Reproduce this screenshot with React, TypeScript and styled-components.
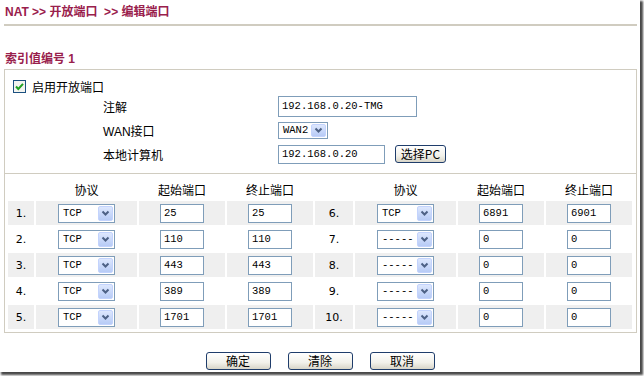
import styled, { createGlobalStyle } from "styled-components";

const GlobalStyle = createGlobalStyle`
  html, body {
    margin: 0;
    background: #fff;
    font-family: "Liberation Sans", "Noto Sans CJK SC", sans-serif;
    font-size: 12px;
    color: #000;
  }
`;

const leftRows = [
  { no: "1.", proto: "TCP", start: "25", end: "25" },
  { no: "2.", proto: "TCP", start: "110", end: "110" },
  { no: "3.", proto: "TCP", start: "443", end: "443" },
  { no: "4.", proto: "TCP", start: "389", end: "389" },
  { no: "5.", proto: "TCP", start: "1701", end: "1701" },
];

const rightRows = [
  { no: "6.", proto: "TCP", start: "6891", end: "6901" },
  { no: "7.", proto: "-----", start: "0", end: "0" },
  { no: "8.", proto: "-----", start: "0", end: "0" },
  { no: "9.", proto: "-----", start: "0", end: "0" },
  { no: "10.", proto: "-----", start: "0", end: "0" },
];

const Chevron = () => (
  <svg width="9" height="7" viewBox="0 0 9 7">
    <polyline points="1.5,1.5 4.5,4.5 7.5,1.5" fill="none" stroke="#4d6185" strokeWidth="2" />
  </svg>
);

const Dropdown = ({ value, width, height = 19 }: { value: string; width: number; height?: number }) => (
  <Select $w={width} $h={height}>
    <span>{value}</span>
    <Arrow $h={height - 4}>
      <Chevron />
    </Arrow>
  </Select>
);

const App = () => {
  return (
    <>
      <GlobalStyle />
      <Shell>
        <Frame>
          <Title>NAT &gt;&gt; 开放端口 &nbsp;&gt;&gt; 编辑端口</Title>
          <Rule />
          <SubTitle>索引值编号 1</SubTitle>
          <Panel>
            <TopSection>
              <CheckRow>
                <Check>
                  <svg width="13" height="13" viewBox="0 0 13 13">
                    <rect x="0.5" y="0.5" width="12" height="12" fill="#f4f4f0" stroke="#1c5180" />
                    <polyline points="3,6.5 5.3,9 10,3.8" fill="none" stroke="#21a121" strokeWidth="2" />
                  </svg>
                </Check>
                启用开放端口
              </CheckRow>
              <Settings>
                <Label>注解</Label>
                <div>
                  <TextBox $w={139} $h={21} readOnly value="192.168.0.20-TMG" />
                </div>
                <Label>WAN接口</Label>
                <div>
                  <Dropdown value="WAN2" width={50} height={17} />
                </div>
                <Label>本地计算机</Label>
                <ValueRow>
                  <TextBox $w={107} $h={19} readOnly value="192.168.0.20" />
                  <Button $w={51}>选择PC</Button>
                </ValueRow>
              </Settings>
            </TopSection>
            <TableSection>
              <PortTable>
                <colgroup>
                  <col style={{ width: 26 }} />
                  <col style={{ width: 101 }} />
                  <col style={{ width: 86 }} />
                  <col style={{ width: 86 }} />
                  <col style={{ width: 38 }} />
                  <col style={{ width: 101 }} />
                  <col style={{ width: 86 }} />
                  <col style={{ width: 86 }} />
                </colgroup>
                <thead>
                  <tr>
                    <Head />
                    <Head>协议</Head>
                    <Head>起始端口</Head>
                    <Head>终止端口</Head>
                    <Head />
                    <Head>协议</Head>
                    <Head>起始端口</Head>
                    <Head>终止端口</Head>
                  </tr>
                </thead>
                <tbody>
                  {leftRows.map((l, i) => {
                    const r = rightRows[i];
                    const shade = i % 2 === 0;
                    return (
                      <tr key={l.no}>
                        <Cell $shade={shade}>
                          <No>{l.no}</No>
                        </Cell>
                        <Cell $shade={shade}>
                          <Dropdown value={l.proto} width={57} />
                        </Cell>
                        <Cell $shade={shade}>
                          <TextBox $w={44} $h={19} readOnly value={l.start} />
                        </Cell>
                        <Cell $shade={shade}>
                          <TextBox $w={44} $h={19} readOnly value={l.end} />
                        </Cell>
                        <Cell $shade={shade}>
                          <No>{r.no}</No>
                        </Cell>
                        <Cell $shade={shade}>
                          <Dropdown value={r.proto} width={57} />
                        </Cell>
                        <Cell $shade={shade}>
                          <TextBox $w={44} $h={19} readOnly value={r.start} />
                        </Cell>
                        <Cell $shade={shade}>
                          <TextBox $w={44} $h={19} readOnly value={r.end} />
                        </Cell>
                      </tr>
                    );
                  })}
                </tbody>
              </PortTable>
            </TableSection>
          </Panel>
          <Actions>
            <Button $w={65}>确定</Button>
            <Button $w={65}>清除</Button>
            <Button $w={65}>取消</Button>
          </Actions>
        </Frame>
      </Shell>
    </>
  );
};

export default App;

const Shell = styled.div`
  width: 644px;
  height: 376px;
  overflow: hidden;
`;

const Frame = styled.div`
  width: 640px;
  height: 372px;
  background: #fff;
  box-shadow: 2px 2px 2px 1px rgba(40, 40, 40, 0.85);
`;

const Title = styled.div`
  padding: 5px 0 0 5px;
  height: 14px;
  line-height: 14px;
  font-weight: bold;
  font-size: 12px;
  color: #99204c;
  white-space: nowrap;
`;

const Rule = styled.div`
  margin: 5px 0 0 4px;
  width: 633px;
  height: 2px;
  background: #d0ccc0;
`;

const SubTitle = styled.div`
  margin: 26px 0 0 5px;
  height: 14px;
  line-height: 14px;
  font-weight: bold;
  font-size: 12px;
  color: #99204c;
`;

const Panel = styled.div`
  margin: 3px 0 0 4px;
  width: 633px;
  box-sizing: border-box;
  border: 1px solid #d0ccc0;
`;

const TopSection = styled.div`
  padding: 8px 0 7px 8px;
`;

const CheckRow = styled.div`
  display: flex;
  align-items: center;
  gap: 6px;
  height: 16px;
  font-family: "Noto Sans CJK SC", sans-serif;
`;

const Check = styled.span`
  display: flex;
  width: 13px;
  height: 13px;
`;

const Settings = styled.div`
  display: grid;
  grid-template-columns: 175px auto;
  grid-auto-rows: 24px;
  align-items: center;
  padding-left: 90px;
`;

const Label = styled.div`
  font-family: "Liberation Sans", "Noto Sans CJK SC", sans-serif;
  font-size: 12px;
`;

const ValueRow = styled.div`
  display: flex;
  align-items: center;
  gap: 10px;
`;

const TextBox = styled.input<{ $w: number; $h: number }>`
  width: ${({ $w }) => $w}px;
  height: ${({ $h }) => $h}px;
  box-sizing: border-box;
  border: 1px solid #7f9db9;
  background: #fff;
  padding: 0 0 0 3px;
  margin: 0;
  font-family: "Liberation Mono", monospace;
  font-size: 10.5px;
  color: #000;
  outline: none;
  display: block;
`;

const Select = styled.div<{ $w: number; $h: number }>`
  display: inline-flex;
  align-items: center;
  justify-content: space-between;
  width: ${({ $w }) => $w}px;
  height: ${({ $h }) => $h}px;
  box-sizing: border-box;
  border: 1px solid #7f9db9;
  background: #fff;
  padding: 0 1px 0 4px;
  font-family: "Liberation Mono", monospace;
  font-size: 10.5px;
  vertical-align: middle;
`;

const Arrow = styled.span<{ $h: number }>`
  display: flex;
  align-items: center;
  justify-content: center;
  width: 15px;
  height: ${({ $h }) => $h}px;
  box-sizing: border-box;
  border: 1px solid #c3d3fd;
  border-radius: 2px;
  background: linear-gradient(#dde7fd, #b7cbf6);
`;

const Button = styled.button<{ $w: number }>`
  width: ${({ $w }) => $w}px;
  height: 18px;
  padding: 0;
  margin: 0;
  box-sizing: border-box;
  border: 1px solid #1f3d6b;
  border-radius: 3px;
  background: linear-gradient(#ffffff, #f2f1ea 60%, #d8d5c8);
  font-family: "Noto Sans CJK SC", sans-serif;
  font-size: 12px;
  line-height: 16px;
  color: #000;
`;

const TableSection = styled.div`
  border-top: 1px solid #d0ccc0;
  padding: 0 1px 1px;
`;

const PortTable = styled.table`
  table-layout: fixed;
  width: 628px;
  border-collapse: separate;
  border-spacing: 2px;
`;

const Head = styled.th`
  height: 23px;
  padding: 4px 0 0;
  box-sizing: border-box;
  font-weight: normal;
  font-family: "Noto Sans CJK SC", sans-serif;
  font-size: 12px;
  text-align: center;
  vertical-align: middle;
`;

const Cell = styled.td<{ $shade: boolean }>`
  height: 24px;
  padding: 0;
  background: ${({ $shade }) => ($shade ? "#efefef" : "#fff")};
  text-align: center;
  vertical-align: middle;

  & > input {
    display: inline-block;
    vertical-align: middle;
  }
`;

const No = styled.span`
  font-family: "DejaVu Sans", sans-serif;
  font-size: 11px;
`;

const Actions = styled.div`
  display: flex;
  justify-content: center;
  gap: 17px;
  margin-top: 19px;
`;
